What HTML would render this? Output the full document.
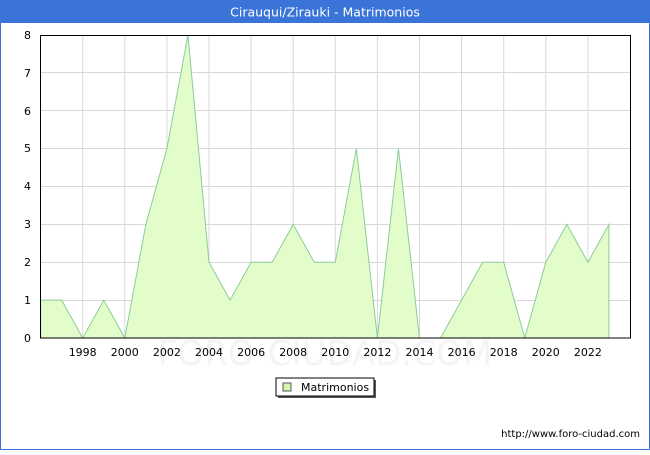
<!DOCTYPE html>
<html><head><style>
body{margin:0;width:650px;height:450px;overflow:hidden;background:#fff}
</style></head><body>
<svg width="650" height="450" xmlns="http://www.w3.org/2000/svg" font-family="DejaVu Sans, Liberation Sans, sans-serif">
<rect x="0.5" y="0.5" width="649" height="449" fill="#fff" stroke="#3a74d8"/>
<rect x="0" y="0" width="650" height="23" fill="#3a74d8"/>
<text x="325" y="16.5" font-size="12.5" fill="#fff" text-anchor="middle">Cirauqui/Zirauki - Matrimonios</text>
<text x="325" y="365" font-size="34" fill="#f4f4f7" text-anchor="middle">FORO-CIUDAD.COM</text>
<g stroke="#d8d8d8" stroke-width="1">
<line x1="40" x2="630" y1="300.5" y2="300.5"/><line x1="40" x2="630" y1="262.5" y2="262.5"/>
<line x1="40" x2="630" y1="224.5" y2="224.5"/><line x1="40" x2="630" y1="186.5" y2="186.5"/>
<line x1="40" x2="630" y1="148.5" y2="148.5"/><line x1="40" x2="630" y1="110.5" y2="110.5"/>
<line x1="40" x2="630" y1="72.5" y2="72.5"/>
<line x1="82.7" x2="82.7" y1="35" y2="338"/><line x1="124.8" x2="124.8" y1="35" y2="338"/>
<line x1="166.9" x2="166.9" y1="35" y2="338"/><line x1="209" x2="209" y1="35" y2="338"/>
<line x1="251.1" x2="251.1" y1="35" y2="338"/><line x1="293.2" x2="293.2" y1="35" y2="338"/>
<line x1="335.3" x2="335.3" y1="35" y2="338"/><line x1="377.4" x2="377.4" y1="35" y2="338"/>
<line x1="419.5" x2="419.5" y1="35" y2="338"/><line x1="461.6" x2="461.6" y1="35" y2="338"/>
<line x1="503.7" x2="503.7" y1="35" y2="338"/><line x1="545.8" x2="545.8" y1="35" y2="338"/>
<line x1="587.9" x2="587.9" y1="35" y2="338"/>
</g>
<polygon fill="#e2fdc9" stroke="#8ccc9c" stroke-width="1" points="40.6,338 40.6,300.1 61.65,300.1 82.7,338 103.75,300.1 124.8,338 145.85,224.4 166.9,148.6 187.95,35 209,262.25 230.05,300.1 251.1,262.25 272.15,262.25 293.2,224.4 314.25,262.25 335.3,262.25 356.35,148.6 377.4,338 398.45,148.6 419.5,338 440.55,338 461.6,300.1 482.65,262.25 503.7,262.25 524.75,338 545.8,262.25 566.85,224.4 587.9,262.25 608.95,224.4 608.95,338"/>
<rect x="40.5" y="35.5" width="590" height="302.5" fill="none" stroke="#000" stroke-width="1"/>
<g font-size="11" fill="#000" text-anchor="end">
<text x="31" y="342">0</text><text x="31" y="304">1</text><text x="31" y="266">2</text>
<text x="31" y="228">3</text><text x="31" y="190">4</text><text x="31" y="152">5</text>
<text x="31" y="115">6</text><text x="31" y="77">7</text><text x="31" y="39">8</text>
</g>
<g font-size="11" fill="#000" text-anchor="middle">
<text x="82.7" y="356">1998</text><text x="124.8" y="356">2000</text><text x="166.9" y="356">2002</text>
<text x="209" y="356">2004</text><text x="251.1" y="356">2006</text><text x="293.2" y="356">2008</text>
<text x="335.3" y="356">2010</text><text x="377.4" y="356">2012</text><text x="419.5" y="356">2014</text>
<text x="461.6" y="356">2016</text><text x="503.7" y="356">2018</text><text x="545.8" y="356">2020</text>
<text x="587.9" y="356">2022</text>
</g>
<rect x="278" y="380" width="98" height="18" fill="#555"/>
<rect x="276" y="378" width="98" height="18" fill="#fff" stroke="#000"/>
<rect x="283" y="383" width="8" height="8" fill="#d4f7b0" stroke="#555"/>
<text x="301" y="391" font-size="11" fill="#000">Matrimonios</text>
<text x="640" y="437" font-size="10" fill="#000" text-anchor="end">http://www.foro-ciudad.com</text>
</svg>
</body></html>
